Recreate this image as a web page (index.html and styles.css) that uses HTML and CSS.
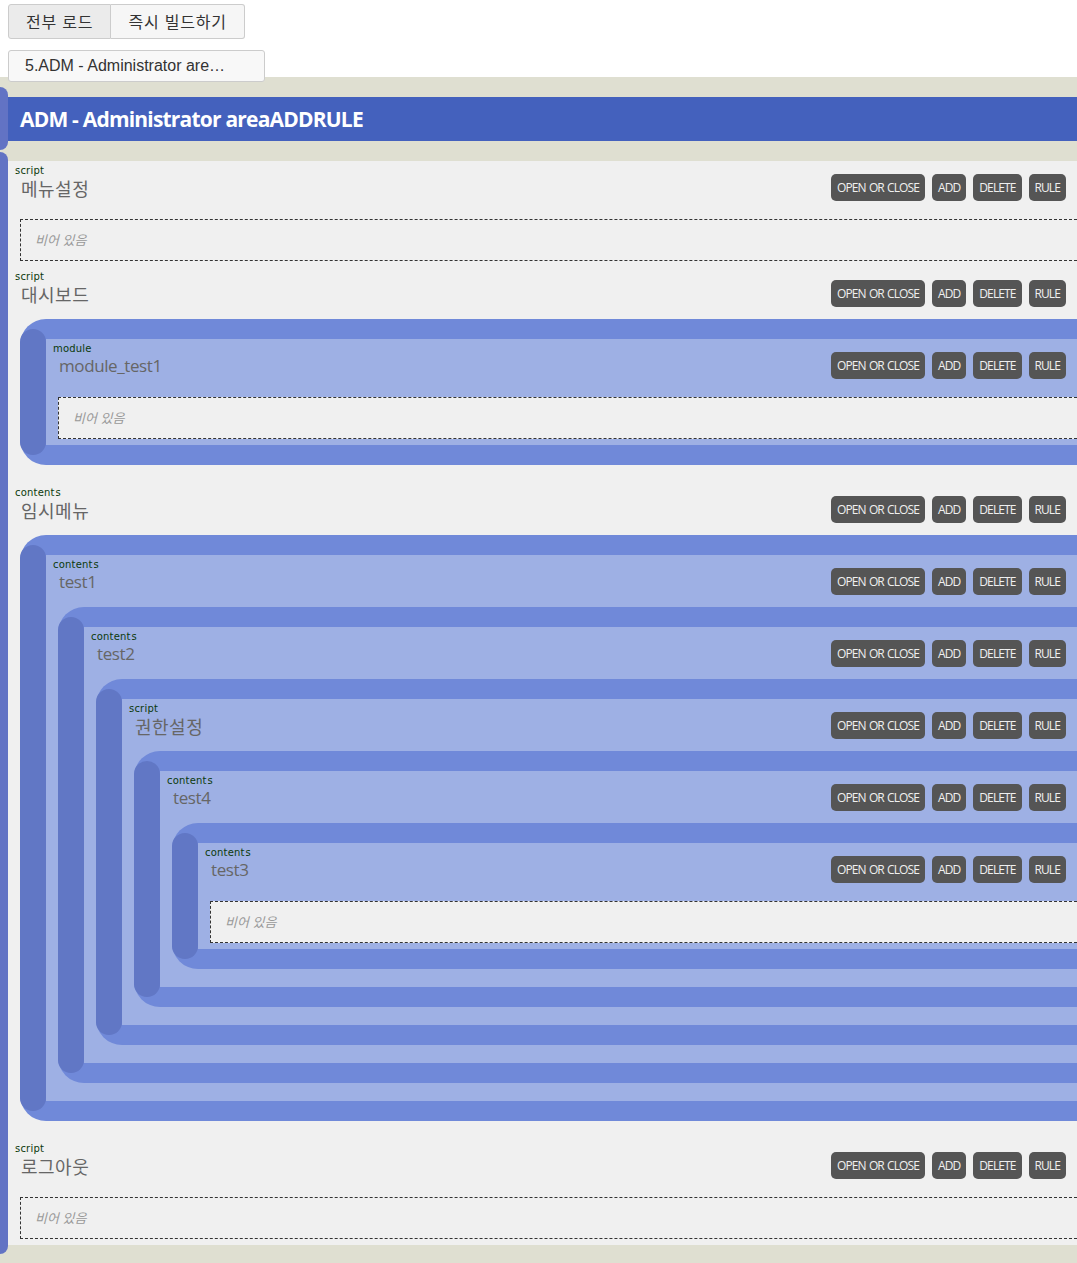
FILE: index.html
```html
<!DOCTYPE html>
<html lang="ko">
<head>
<meta charset="utf-8">
<title>Tree</title>
<link rel="stylesheet" href="styles.css">
</head>
<body>
<div class="toolbar">
  <div class="btn-group">
    <button class="tb-btn first">전부 로드</button><button class="tb-btn second">즉시 빌드하기</button>
  </div>
  <div class="select">5.ADM - Administrator are…</div>
</div>
<div class="stage">
  <div class="head">ADM - Administrator areaADDRULE</div>
  <div class="tree">
    <div class="item">
      <div class="hdr"><div class="meta"><div class="type">script</div><div class="name ko">메뉴설정</div></div><div class="btns"><span class="btn">OPEN OR CLOSE</span><span class="btn">ADD</span><span class="btn">DELETE</span><span class="btn">RULE</span></div></div>
      <div class="empty">비어 있음</div>
    </div>
    <div class="item">
      <div class="hdr"><div class="meta"><div class="type">script</div><div class="name ko">대시보드</div></div><div class="btns"><span class="btn">OPEN OR CLOSE</span><span class="btn">ADD</span><span class="btn">DELETE</span><span class="btn">RULE</span></div></div>
      <div class="nest">
        <div class="item">
          <div class="hdr"><div class="meta"><div class="type">module</div><div class="name">module_test1</div></div><div class="btns"><span class="btn">OPEN OR CLOSE</span><span class="btn">ADD</span><span class="btn">DELETE</span><span class="btn">RULE</span></div></div>
          <div class="empty">비어 있음</div>
        </div>
      </div>
    </div>
    <div class="item">
      <div class="hdr"><div class="meta"><div class="type">content s</div><div class="name ko">임시메뉴</div></div><div class="btns"><span class="btn">OPEN OR CLOSE</span><span class="btn">ADD</span><span class="btn">DELETE</span><span class="btn">RULE</span></div></div>
      <div class="nest">
        <div class="item">
          <div class="hdr"><div class="meta"><div class="type">content s</div><div class="name">test1</div></div><div class="btns"><span class="btn">OPEN OR CLOSE</span><span class="btn">ADD</span><span class="btn">DELETE</span><span class="btn">RULE</span></div></div>
          <div class="nest">
            <div class="item">
              <div class="hdr"><div class="meta"><div class="type">content s</div><div class="name">test2</div></div><div class="btns"><span class="btn">OPEN OR CLOSE</span><span class="btn">ADD</span><span class="btn">DELETE</span><span class="btn">RULE</span></div></div>
              <div class="nest">
                <div class="item">
                  <div class="hdr"><div class="meta"><div class="type">script</div><div class="name ko">권한설정</div></div><div class="btns"><span class="btn">OPEN OR CLOSE</span><span class="btn">ADD</span><span class="btn">DELETE</span><span class="btn">RULE</span></div></div>
                  <div class="nest">
                    <div class="item">
                      <div class="hdr"><div class="meta"><div class="type">content s</div><div class="name">test4</div></div><div class="btns"><span class="btn">OPEN OR CLOSE</span><span class="btn">ADD</span><span class="btn">DELETE</span><span class="btn">RULE</span></div></div>
                      <div class="nest">
                        <div class="item">
                          <div class="hdr"><div class="meta"><div class="type">content s</div><div class="name">test3</div></div><div class="btns"><span class="btn">OPEN OR CLOSE</span><span class="btn">ADD</span><span class="btn">DELETE</span><span class="btn">RULE</span></div></div>
                          <div class="empty">비어 있음</div>
                        </div>
                      </div>
                    </div>
                  </div>
                </div>
              </div>
            </div>
          </div>
        </div>
      </div>
    </div>
    <div class="item">
      <div class="hdr"><div class="meta"><div class="type">script</div><div class="name ko">로그아웃</div></div><div class="btns"><span class="btn">OPEN OR CLOSE</span><span class="btn">ADD</span><span class="btn">DELETE</span><span class="btn">RULE</span></div></div>
      <div class="empty">비어 있음</div>
    </div>
  </div>
</div>
</body>
</html>
```

FILE: styles.css
```css
html, body {
  margin: 0;
  padding: 0;
  background: #ffffff;
  overflow-x: hidden;
}

body {
  font-family: "Liberation Sans", "Noto Sans CJK KR", sans-serif;
  color: #333333;
}

.toolbar {
  padding: 4px 8px 0 8px;
}

.btn-group {
  display: flex;
}

.tb-btn {
  height: 35px;
  padding: 0 17px;
  border: 1px solid #cccccc;
  font-family: "Noto Sans CJK KR", "Liberation Sans", sans-serif;
  font-size: 16px;
  letter-spacing: 0.8px;
  color: #333333;
  line-height: 33px;
  margin: 0;
}

.tb-btn.first {
  background: #ebebeb;
  border-radius: 3px 0 0 3px;
}

.tb-btn.second {
  background: #f6f6f6;
  border-left: 0;
  border-radius: 0 3px 3px 0;
}

.select {
  position: relative;
  z-index: 1;
  box-sizing: border-box;
  width: 257px;
  height: 32px;
  margin-top: 11px;
  margin-bottom: -5px;
  padding-left: 16px;
  border: 1px solid #cccccc;
  border-radius: 3px;
  background: #f8f8f8;
  font-family: "Liberation Sans", sans-serif;
  font-size: 16px;
  line-height: 30px;
  color: #333333;
  white-space: nowrap;
  overflow: hidden;
}

.stage {
  background: #dfdfd1;
  padding: 20px 0 20px 0;
}

.head {
  position: relative;
  margin-left: 8px;
  height: 44px;
  background: #4461bd;
  color: #ffffff;
  font-family: "Open Sans", "Liberation Sans", sans-serif;
  font-weight: 700;
  font-size: 21px;
  letter-spacing: -0.8px;
  line-height: 44px;
  padding-left: 12px;
}

.head::before {
  content: "";
  position: absolute;
  left: -8px;
  top: -10px;
  bottom: -9px;
  width: 8px;
  border-radius: 0 8px 8px 0;
  background: #6273c4;
}

.tree {
  position: relative;
  margin: 20px 0 0 8px;
  background: #f0f0f0;
}

.tree::before {
  content: "";
  position: absolute;
  left: -8px;
  top: -9px;
  bottom: -9px;
  width: 8px;
  border-radius: 0 8px 8px 0;
  background: #6273c4;
}

.item {
  display: flow-root;
}

.hdr {
  display: flex;
  align-items: flex-start;
  height: 52px;
}

.meta {
  padding: 4px 0 0 7px;
}

.type {
  font-family: "DejaVu Sans", sans-serif;
  font-size: 10px;
  letter-spacing: 0.2px;
  word-spacing: -2.5px;
  line-height: 12px;
  color: #0b3a0b;
  white-space: pre;
}

.name {
  padding-left: 6px;
  font-family: "Open Sans", "Noto Sans CJK KR", sans-serif;
  font-size: 17px;
  letter-spacing: -0.4px;
  line-height: 22px;
  color: #666666;
}

.name.ko {
  font-family: "Noto Sans CJK KR", sans-serif;
  font-size: 18px;
  letter-spacing: 0.5px;
}

.btns {
  display: flex;
  gap: 7px;
  margin: 13px 11px 0 auto;
}

.btn {
  display: block;
  height: 27px;
  padding: 0 6px;
  border-radius: 5px;
  background: #555555;
  color: #f0f0f0;
  font-family: "Open Sans", "Liberation Sans", sans-serif;
  font-size: 12px;
  letter-spacing: -0.9px;
  word-spacing: 1px;
  line-height: 27px;
  white-space: nowrap;
}

.empty {
  box-sizing: border-box;
  height: 42px;
  margin: 6px 0 6px 12px;
  padding-left: 14px;
  border: 1px dashed #333333;
  border-right: 0;
  background: #f0f0f0;
  font-family: "Noto Sans CJK KR", sans-serif;
  font-style: italic;
  font-size: 13px;
  line-height: 40px;
  color: #999999;
}

.nest {
  position: relative;
  margin: 0 0 18px 12px;
  padding: 20px 0 20px 26px;
  border-radius: 26px 0 0 26px;
  background: #7089d9;
}

.nest::before {
  content: "";
  position: absolute;
  left: 0;
  top: 10px;
  bottom: 10px;
  width: 26px;
  border-radius: 13px;
  background: #6177c5;
}

.nest > .item {
  position: relative;
  background: #9eb0e4;
}
```
